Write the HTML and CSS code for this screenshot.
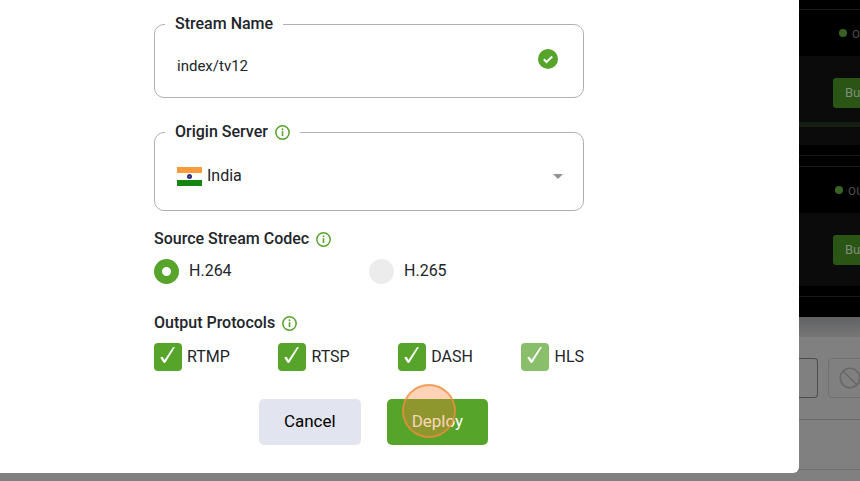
FILE: index.html
```html
<!DOCTYPE html>
<html lang="en">
<head>
<meta charset="utf-8">
<meta name="viewport" content="width=device-width, initial-scale=1">
<title>Deploy stream</title>
<link rel="stylesheet" href="styles.css">
</head>
<body>
<svg class="symbols" aria-hidden="true">
  <symbol id="info" viewBox="0 0 16 16">
    <circle cx="8" cy="8" r="7.1" fill="none" stroke="currentColor" stroke-width="1.6"/>
    <path d="M8 6.6v5.2" stroke="currentColor" stroke-width="1.7"/>
    <circle cx="8" cy="4.5" r="1" fill="currentColor"/>
  </symbol>
  <symbol id="tick" viewBox="0 0 28 28">
    <path d="M6.2 14.4 8.6 13.8 10.5 17 19 4.2 21 4 11.3 19.8 9.8 19.9Z" fill="#fff"/>
  </symbol>
</svg>
<div class="stage">
  <div class="page" aria-hidden="true" inert>
    <div class="plans">
      <section class="plan">
        <div class="status first"><span class="dot"></span><span>out</span></div>
        <div class="offer tall"><button class="buy" type="button">Buy</button><div class="meter"></div></div>
        <div class="gap"></div>
      </section>
      <section class="plan">
        <div class="status"><span class="dot"></span><span>out</span></div>
        <div class="offer"><button class="buy" type="button">Buy</button></div>
        <div class="gap"></div>
      </section>
      <div class="plan-end"></div>
    </div>
    <div class="fade"></div>
    <div class="tools">
      <div class="tool-box"></div>
      <div class="tool-box light">
        <svg class="ban" viewBox="0 0 22 22"><g fill="none" stroke="#686869" stroke-width="1.6"><circle cx="11" cy="11" r="9.8"/><path d="m4 4 14 14"/></g></svg>
      </div>
    </div>
    <div class="list-row"></div>
    <div class="list-row last"></div>
  </div>

  <main class="dialog">
    <form class="form">
      <fieldset class="field">
        <legend><label for="name">Stream Name</label></legend>
        <div class="name-row">
          <input id="name" class="name" type="text" value="index/tv12">
          <svg class="valid" viewBox="0 0 20 20"><circle cx="10" cy="10" r="10" fill="#57a42b"/><path d="m5.8 10.3 2.7 2.7 5.7-5.5" fill="none" stroke="#fff" stroke-width="2"/></svg>
        </div>
      </fieldset>

      <fieldset class="field server">
        <legend><label for="server">Origin Server</label><svg class="info"><use href="#info"/></svg></legend>
        <div class="server-row">
          <svg class="flag" viewBox="0 0 25 19"><path fill="#f79c3d" d="M0 0h25v6H0z"/><path fill="#fff" d="M0 6h25v7H0z"/><path fill="#138510" d="M0 13h25v6H0z"/><circle cx="12.5" cy="9.5" r="2.5" fill="#302d80"/><circle cx="12.5" cy="9.5" r=".6" fill="#8280b5"/></svg>
          <select id="server" class="select"><option>India</option></select>
          <svg class="caret" viewBox="0 0 10 5"><path d="M0 0h10L5 5z" fill="#929292"/></svg>
        </div>
      </fieldset>

      <h2 class="heading codec-heading">Source Stream Codec<svg class="info"><use href="#info"/></svg></h2>
      <div class="codecs">
        <label class="codec"><input type="radio" name="codec" checked><span>H.264</span></label>
        <label class="codec"><input type="radio" name="codec"><span>H.265</span></label>
      </div>

      <h2 class="heading output-heading">Output Protocols<svg class="info"><use href="#info"/></svg></h2>
      <div class="protocols">
        <label class="protocol"><span class="check"><input type="checkbox" checked><svg><use href="#tick"/></svg></span><span>RTMP</span></label>
        <label class="protocol"><span class="check"><input type="checkbox" checked><svg><use href="#tick"/></svg></span><span>RTSP</span></label>
        <label class="protocol"><span class="check"><input type="checkbox" checked><svg><use href="#tick"/></svg></span><span>DASH</span></label>
        <label class="protocol"><span class="check"><input type="checkbox" checked disabled><svg><use href="#tick"/></svg></span><span>HLS</span></label>
      </div>

      <div class="actions">
        <button class="button cancel" type="button">Cancel</button>
        <button class="button deploy" type="submit">Deploy<span class="pointer"></span></button>
      </div>
    </form>
  </main>
</div>
</body>
</html>
```
FILE: styles.css
```css
* { box-sizing: border-box; }

body {
  margin: 0;
  background: #808080;
  color: #212529;
  font: 16px/20px Roboto, sans-serif;
}

input, select, button { font: inherit; color: inherit; margin: 0; }

.symbols { display: none; }

.stage {
  --edge: 61px;
  display: grid;
  grid-template-columns: minmax(0, 1fr) var(--edge);
  min-height: 100vh;
  overflow: hidden;
}

/* Dimmed page behind the dialog */
.page {
  grid-area: 1 / 1 / 2 / 3;
  min-width: 0;
  padding-left: calc(100% - var(--edge));
  overflow: hidden;
}

.plans { background: #000; padding-top: 9px; }
.plan { border-top: 1px solid #171717; }

.status {
  display: flex;
  align-items: center;
  gap: 5px;
  height: 46px;
  padding-left: 36px;
  color: #47474b;
  font-size: 14px;
}
.status.first { padding-left: 40px; }
.dot { flex: none; width: 8px; height: 8px; border-radius: 50%; background: #386322; }

.offer { background: #0b0b0b; padding: 22px 0 21px 34px; }
.offer.tall { padding-bottom: 18px; }
.buy {
  display: block;
  width: 64px;
  height: 30px;
  padding: 0 0 0 12px;
  border: 0;
  border-radius: 3px;
  background: #2a5515;
  color: #7f8d78;
  font-size: 13px;
  text-align: left;
}
.meter { height: 5px; margin: 14px 0 0 -34px; background: #151e11; }
.gap { height: 11px; border-bottom: 1px solid #171717; }
.plan + .plan { margin-top: 10px; }
.plan-end { height: 20px; }

.fade { height: 20px; background: linear-gradient(#606163, #777777); }

.tools {
  display: flex;
  gap: 10px;
  padding: 21px 0;
  border-bottom: 1px solid #686868;
}
.tool-box {
  flex: none;
  width: 19px;
  height: 40px;
  border: 1px solid #4d4d4d;
  border-left: 0;
  border-radius: 0 4px 4px 0;
}
.tool-box.light {
  width: 44px;
  padding: 8px 10px;
  border: 1px solid #717171;
  border-radius: 4px;
}
.ban { display: block; width: 22px; height: 22px; }
.list-row { height: 50px; border-bottom: 1px solid #707070; }
.list-row.last { height: 11px; border: 0; }

/* Dialog */
.dialog {
  grid-area: 1 / 1;
  z-index: 1;
  align-self: start;
  padding: 14px 32px 28px 154px;
  border-radius: 0 0 6px 0;
  background: #fff;
}
.form { max-width: 430px; }

.field {
  min-width: 0;
  margin: 0;
  padding: 0 20px 0 10px;
  border: 1px solid #b0b0b3;
  border-radius: 10px;
}
.field legend {
  padding: 0 10px;
  font-weight: 500;
}
.info {
  width: 15px;
  height: 15px;
  margin-left: 7px;
  color: #57a42b;
  vertical-align: -3px;
}
.server { margin-top: 24px; }

.name-row, .server-row { display: flex; align-items: center; padding-left: 12px; }
.name {
  flex: 1;
  min-width: 0;
  height: 63px;
  padding: 0;
  border: 0;
  outline: 0;
  background: none;
  font-size: 15px;
}
.valid { width: 20px; height: 20px; margin: 0 5px 13px 0; }

.flag { width: 25px; height: 19px; }
.select {
  flex: 1;
  min-width: 0;
  height: 68px;
  padding: 0 0 0 5px;
  border: 0;
  outline: 0;
  appearance: none;
  background: none;
}
.caret { width: 10px; height: 5px; }

.heading { margin: 0; font-size: 16px; font-weight: 500; }
.codec-heading { margin-top: 18px; }
.output-heading { margin-top: 29px; }

.codecs { display: grid; grid-template-columns: 1fr 1fr; margin-top: 10px; }
.codec { display: flex; gap: 10px; height: 25px; line-height: 24px; }
.codec input {
  width: 25px;
  height: 25px;
  appearance: none;
  border-radius: 50%;
  background: #ececec;
}
.codec input:checked { background: radial-gradient(circle, #fff 4px, #57a42b 5px); }

.protocols { display: flex; justify-content: space-between; margin-top: 10px; }
.protocol { display: flex; align-items: center; gap: 5px; line-height: 28px; }
.check { display: grid; }
.check > * { grid-area: 1 / 1; width: 28px; height: 28px; }
.check input { appearance: none; border-radius: 4px; background: #57a42b; }
.check input:disabled { background: #89bf6b; }
.check svg { z-index: 1; pointer-events: none; }

.actions { display: flex; justify-content: center; gap: 26px; margin-top: 28px; padding-left: 9px; }
.button {
  height: 46px;
  padding: 0 25px 2px;
  border: 0;
  border-radius: 5px;
  font-size: 17px;
}
.cancel { background: #e2e5ef; color: #000; }
.deploy { position: relative; background: #57a42b; color: #fff; }
.pointer {
  position: absolute;
  top: -15px;
  left: 15px;
  width: 54px;
  height: 54px;
  border: 2px solid rgba(240, 140, 60, .75);
  border-radius: 50%;
  background: rgba(246, 130, 50, .35);
}
```
